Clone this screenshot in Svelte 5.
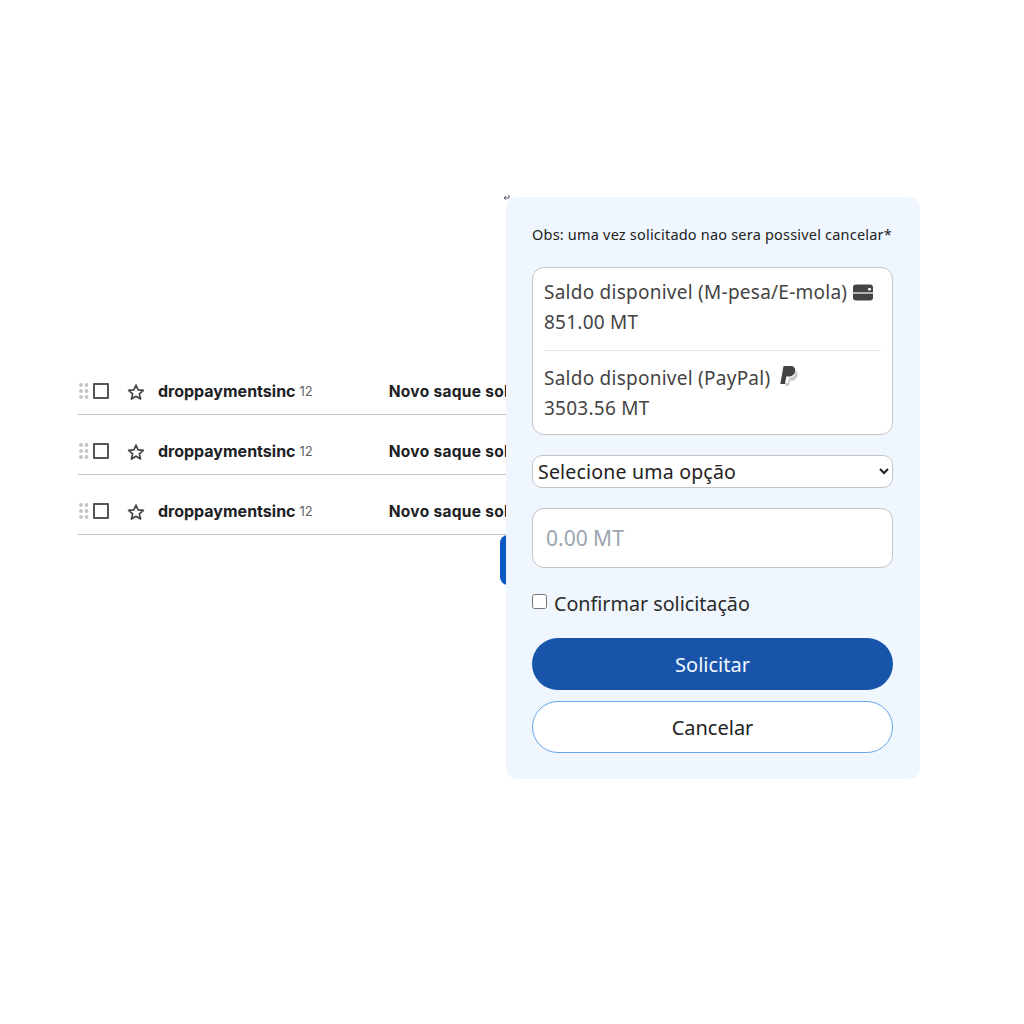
<script lang="ts">
	const rows = [1, 2, 3];
</script>

<div class="page">
	<ul class="mail-list">
		{#each rows as row (row)}
			<li class="mail-row">
				<svg class="grip" width="10" height="16" viewBox="0 0 10 16" aria-hidden="true">
					{#each [2, 8, 14] as y}
						<circle cx="2" cy={y} r="1.9" />
						<circle cx="7.5" cy={y} r="1.9" />
					{/each}
				</svg>
				<span class="box"></span>
				<svg class="star" width="20" height="20" viewBox="0 0 24 24" aria-hidden="true">
					<path d="M12 3.6l2.5 5.9 6.4.5-4.9 4.2 1.5 6.2L12 17.1l-5.5 3.3L8 14.2 3.1 10l6.4-.5z" />
				</svg>
				<span class="sender">droppaymentsinc</span>
				<span class="count">12</span>
				<span class="subject">Novo saque solicitado</span>
			</li>
		{/each}
	</ul>

	<span class="peek"></span>

	<section class="modal">
		<svg class="corner" width="8" height="6" viewBox="0 0 8 6" aria-hidden="true">
			<path d="M1 4h5V1M1 4l2-2M1 4l2 1.6" />
		</svg>
		<p class="note">Obs: uma vez solicitado nao sera possivel cancelar*</p>

		<div class="balances">
			<div class="balance">
				<div>
					Saldo disponivel (M-pesa/E-mola)
					<svg class="icon wallet" width="22" height="17" viewBox="0 0 22 17" aria-hidden="true">
						<rect x="1" y="0.500" width="20" height="16" rx="3" />
						<path d="M1 9h20" stroke="#fff" stroke-width="1.200" />
						<rect x="16" y="4" width="3" height="2.500" rx="1" fill="#fff" />
					</svg>
				</div>
				<div>851.00 MT</div>
			</div>
			<div class="balance">
				<div>
					Saldo disponivel (PayPal)
					<svg class="icon paypal" width="20" height="22" viewBox="0 0 20 22" aria-hidden="true">
						<path class="pale" d="M16.500 5.500c1.600 1 2.300 2.700 1.900 5-.6 3.200-3 5.300-6 5.300h-1.600l-.9 5H6.200l.3-2.800h2.400l1.200-5.500h1.500c3.300 0 4.600-3.800 4.900-7z" />
						<path d="M4.500 1h6.700c3.500 0 5.500 2 5 5-.6 3.500-3 5.500-6.500 5.500H7.300L6 19H1.300z" />
					</svg>
				</div>
				<div>3503.56 MT</div>
			</div>
		</div>

		<select class="method">
			<option>Selecione uma opção</option>
		</select>

		<input class="amount" type="text" placeholder="0.00 MT" />

		<label class="confirm">
			<input type="checkbox" />
			<span>Confirmar solicitação</span>
		</label>

		<button class="btn primary" type="button">Solicitar</button>
		<button class="btn outline" type="button">Cancelar</button>
	</section>
</div>

<style>
	:global(body) {
		background: #fff;
	}

	.page {
		position: relative;
		height: 1024px;
		padding: 355px 0 0 78px;
		box-sizing: border-box;
		overflow: hidden;
		font-family: "Noto Sans", "Open Sans", sans-serif;
	}

	.mail-list {
		width: 432px;
		margin: 0;
		padding: 0;
		list-style: none;
		font-family: Inter, Roboto, sans-serif;
	}

	.mail-row {
		display: flex;
		align-items: center;
		height: 60px;
		padding-top: 13px;
		box-sizing: border-box;
		border-bottom: 1px solid #c4c4c4;
		white-space: nowrap;
	}

	.grip {
		flex: none;
		margin: 0 4px 0 1px;
		fill: #c4c4c4;
	}

	.box {
		flex: none;
		width: 12px;
		height: 12px;
		border: 2px solid #555;
		border-radius: 1px;
	}

	.star {
		flex: none;
		margin: 1px 0 0 17px;
		fill: none;
		stroke: #444;
		stroke-width: 2;
		stroke-linejoin: round;
	}

	.sender {
		margin-left: 12px;
		font-size: 16px;
		font-weight: 700;
		color: #202124;
	}

	.count {
		margin-left: 4px;
		font-size: 13px;
		color: #5f6368;
	}

	.subject {
		margin-left: 76px;
		font-size: 15.500px;
		font-weight: 700;
		letter-spacing: 0.3px;
		color: #202124;
	}

	.peek {
		position: absolute;
		left: 500px;
		top: 535px;
		width: 20px;
		height: 50px;
		border-radius: 8px;
		background: #0b57c4;
	}

	.modal {
		position: absolute;
		left: 506px;
		top: 197px;
		display: flex;
		flex-direction: column;
		width: 414px;
		height: 582px;
		padding: 27px 26px;
		box-sizing: border-box;
		border-radius: 10px;
		background: #eff6fe;
		color: #222;
	}

	.corner {
		position: absolute;
		left: -3px;
		top: -3px;
		fill: none;
		stroke: #556;
		stroke-width: 1;
	}

	.note {
		margin: 0 0 23px;
		font-size: 14.500px;
		line-height: 20px;
		letter-spacing: 0.2px;
		white-space: nowrap;
		color: #222;
	}

	.balances {
		display: flex;
		flex: none;
		flex-direction: column;
		width: 361px;
		height: 168px;
		padding: 9px 11px;
		box-sizing: border-box;
		border: 1px solid #c4c4ca;
		border-radius: 12px;
		background: #fff;
		font-size: 19px;
		line-height: 30px;
		letter-spacing: 0.25px;
		white-space: nowrap;
		color: #444;
	}

	.balance:first-child {
		height: 73px;
		margin-bottom: 12px;
		border-bottom: 1px solid #e8e8e8;
	}

	.icon {
		vertical-align: -2px;
		fill: #444;
	}

	.wallet {
		margin-left: -1px;
	}

	.paypal {
		margin-left: 3px;
	}

	.icon .pale {
		fill: #c9c9c9;
	}

	.method {
		flex: none;
		width: 361px;
		height: 33px;
		margin-top: 20px;
		padding: 0 1px;
		border: 1px solid #c4c4ca;
		border-radius: 10px;
		background: #fff;
		font: inherit;
		font-size: 19.500px;
		letter-spacing: 0.2px;
		color: #222;
	}

	.amount {
		flex: none;
		width: 361px;
		height: 60px;
		margin-top: 20px;
		padding: 0 13px;
		box-sizing: border-box;
		border: 1px solid #c4c4ca;
		border-radius: 12px;
		background: #fff;
		font: inherit;
		font-size: 21px;
		color: #222;
	}

	.amount::placeholder {
		color: #9aa5b1;
	}

	.confirm {
		display: flex;
		flex: none;
		align-items: flex-start;
		gap: 7px;
		height: 30px;
		margin-top: 21px;
		font-size: 19.700px;
		line-height: 30px;
		color: #2b2b2b;
	}

	.confirm input {
		width: 15px;
		height: 15px;
		margin: 5px 0 0;
		flex: none;
	}

	.btn {
		flex: none;
		width: 361px;
		height: 52px;
		padding: 0;
		box-sizing: border-box;
		border-radius: 26px;
		font: inherit;
		font-size: 20px;
	}

	.primary {
		margin-top: 19px;
		border: none;
		background: #1855aa;
		color: #f4f8ff;
	}

	.outline {
		margin-top: 11px;
		border: 1.500px solid #6aa6ea;
		background: #fff;
		color: #222;
	}
</style>
